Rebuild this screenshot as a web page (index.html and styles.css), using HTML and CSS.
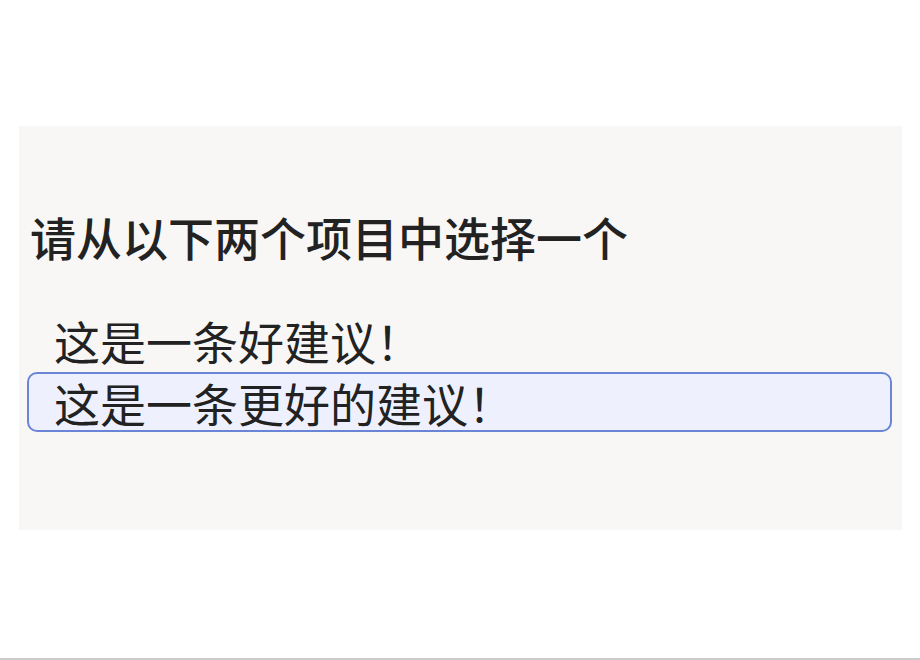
FILE: index.html
```html
<!DOCTYPE html>
<html lang="zh-CN">
<head>
<meta charset="utf-8">
<link rel="stylesheet" href="styles.css">
</head>
<body>
<div class="page">
  <div class="panel">
    <h1 class="title">请从以下两个项目中选择一个</h1>
    <div class="options">
      <div class="option">这是一条好建议！</div>
      <div class="option selected">这是一条更好的建议！</div>
    </div>
  </div>
  <div class="spacer"></div>
  <div class="bottom-line"></div>
</div>
</body>
</html>
```

FILE: styles.css
```css
html, body {
  margin: 0;
  padding: 0;
  background: #ffffff;
}
body {
  font-family: "Noto Sans CJK SC", "Noto Sans", sans-serif;
  color: #222222;
}
.page {
  display: flex;
  flex-direction: column;
  height: 660px;
  padding-top: 126px;
  box-sizing: border-box;
}
.panel {
  margin-left: 19px;
  width: 883px;
  height: 404px;
  background: #f8f7f6;
  box-sizing: border-box;
  padding: 82px 10px 0 8px;
}
.title {
  margin: 0 0 46px 3px;
  font-size: 46px;
  line-height: 56px;
  font-weight: 500;
  color: #222222;
}
.options {
  display: flex;
  flex-direction: column;
  gap: 2px;
}
.option {
  font-size: 46px;
  line-height: 56px;
  border: 2px solid transparent;
  border-radius: 10px;
  padding-left: 25px;
  color: #222222;
}
.option.selected {
  border-color: #6a84d6;
  background: #eef1fd;
}
.spacer {
  flex: 1;
}
.bottom-line {
  height: 2px;
  background: #cccccc;
}
```
